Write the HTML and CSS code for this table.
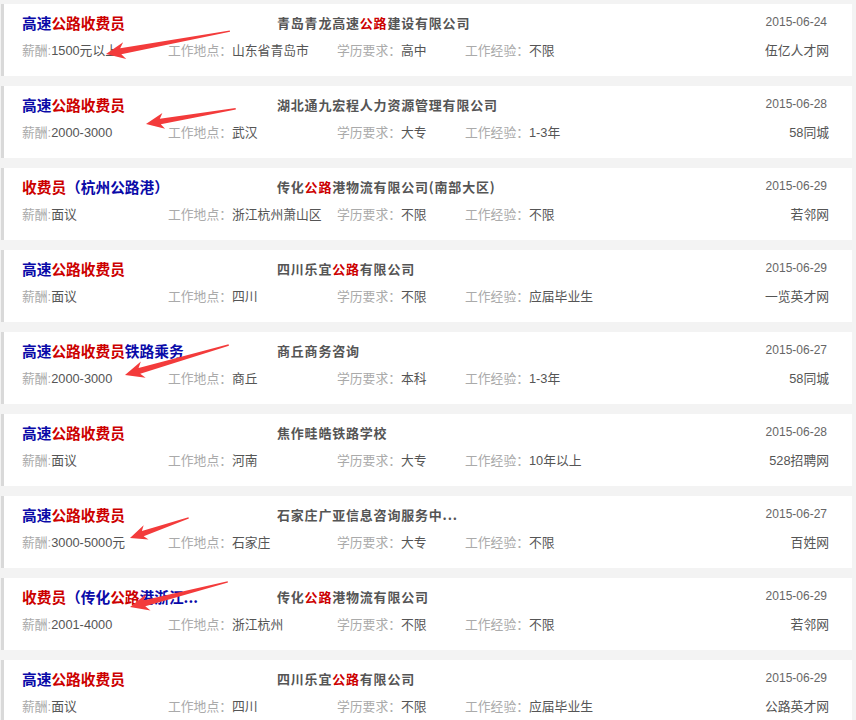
FILE: index.html
```html
<!DOCTYPE html>
<html lang="zh">
<head>
<meta charset="utf-8">
<title>高速公路收费员</title>
<link rel="stylesheet" href="styles.css">
</head>
<body>
<div class="list">
  <div class="card">
    <div class="row top">
      <div class="title"><span class="b">高速</span><span class="r">公路收费员</span></div>
      <div class="company">青岛青龙高速<span class="r">公路</span>建设有限公司</div>
      <div class="date">2015-06-24</div>
    </div>
    <div class="row info">
      <div class="c1"><span class="lab">薪酬:</span>1500元以上</div>
      <div class="c2"><span class="lab">工作地点：</span>山东省青岛市</div>
      <div class="c3"><span class="lab">学历要求：</span>高中</div>
      <div class="c4"><span class="lab">工作经验：</span>不限</div>
      <div class="src">伍亿人才网</div>
    </div>
  </div>
  <div class="card">
    <div class="row top">
      <div class="title"><span class="b">高速</span><span class="r">公路收费员</span></div>
      <div class="company">湖北通九宏程人力资源管理有限公司</div>
      <div class="date">2015-06-28</div>
    </div>
    <div class="row info">
      <div class="c1"><span class="lab">薪酬:</span>2000-3000</div>
      <div class="c2"><span class="lab">工作地点：</span>武汉</div>
      <div class="c3"><span class="lab">学历要求：</span>大专</div>
      <div class="c4"><span class="lab">工作经验：</span>1-3年</div>
      <div class="src">58同城</div>
    </div>
  </div>
  <div class="card">
    <div class="row top">
      <div class="title"><span class="r">收费员</span><span class="b">（杭州公路港）</span></div>
      <div class="company">传化<span class="r">公路</span>港物流有限公司(南部大区)</div>
      <div class="date">2015-06-29</div>
    </div>
    <div class="row info">
      <div class="c1"><span class="lab">薪酬:</span>面议</div>
      <div class="c2"><span class="lab">工作地点：</span>浙江杭州萧山区</div>
      <div class="c3"><span class="lab">学历要求：</span>不限</div>
      <div class="c4"><span class="lab">工作经验：</span>不限</div>
      <div class="src">若邻网</div>
    </div>
  </div>
  <div class="card">
    <div class="row top">
      <div class="title"><span class="b">高速</span><span class="r">公路收费员</span></div>
      <div class="company">四川乐宜<span class="r">公路</span>有限公司</div>
      <div class="date">2015-06-29</div>
    </div>
    <div class="row info">
      <div class="c1"><span class="lab">薪酬:</span>面议</div>
      <div class="c2"><span class="lab">工作地点：</span>四川</div>
      <div class="c3"><span class="lab">学历要求：</span>不限</div>
      <div class="c4"><span class="lab">工作经验：</span>应届毕业生</div>
      <div class="src">一览英才网</div>
    </div>
  </div>
  <div class="card">
    <div class="row top">
      <div class="title"><span class="b">高速</span><span class="r">公路收费员</span><span class="b">铁路乘务</span></div>
      <div class="company">商丘商务咨询</div>
      <div class="date">2015-06-27</div>
    </div>
    <div class="row info">
      <div class="c1"><span class="lab">薪酬:</span>2000-3000</div>
      <div class="c2"><span class="lab">工作地点：</span>商丘</div>
      <div class="c3"><span class="lab">学历要求：</span>本科</div>
      <div class="c4"><span class="lab">工作经验：</span>1-3年</div>
      <div class="src">58同城</div>
    </div>
  </div>
  <div class="card">
    <div class="row top">
      <div class="title"><span class="b">高速</span><span class="r">公路收费员</span></div>
      <div class="company">焦作畦皓铁路学校</div>
      <div class="date">2015-06-28</div>
    </div>
    <div class="row info">
      <div class="c1"><span class="lab">薪酬:</span>面议</div>
      <div class="c2"><span class="lab">工作地点：</span>河南</div>
      <div class="c3"><span class="lab">学历要求：</span>大专</div>
      <div class="c4"><span class="lab">工作经验：</span>10年以上</div>
      <div class="src">528招聘网</div>
    </div>
  </div>
  <div class="card">
    <div class="row top">
      <div class="title"><span class="b">高速</span><span class="r">公路收费员</span></div>
      <div class="company">石家庄广亚信息咨询服务中...</div>
      <div class="date">2015-06-27</div>
    </div>
    <div class="row info">
      <div class="c1"><span class="lab">薪酬:</span>3000-5000元</div>
      <div class="c2"><span class="lab">工作地点：</span>石家庄</div>
      <div class="c3"><span class="lab">学历要求：</span>大专</div>
      <div class="c4"><span class="lab">工作经验：</span>不限</div>
      <div class="src">百姓网</div>
    </div>
  </div>
  <div class="card">
    <div class="row top">
      <div class="title"><span class="r">收费员</span><span class="b">（传化</span><span class="r">公路</span><span class="b">港浙江...</span></div>
      <div class="company">传化<span class="r">公路</span>港物流有限公司</div>
      <div class="date">2015-06-29</div>
    </div>
    <div class="row info">
      <div class="c1"><span class="lab">薪酬:</span>2001-4000</div>
      <div class="c2"><span class="lab">工作地点：</span>浙江杭州</div>
      <div class="c3"><span class="lab">学历要求：</span>不限</div>
      <div class="c4"><span class="lab">工作经验：</span>不限</div>
      <div class="src">若邻网</div>
    </div>
  </div>
  <div class="card">
    <div class="row top">
      <div class="title"><span class="b">高速</span><span class="r">公路收费员</span></div>
      <div class="company">四川乐宜<span class="r">公路</span>有限公司</div>
      <div class="date">2015-06-29</div>
    </div>
    <div class="row info">
      <div class="c1"><span class="lab">薪酬:</span>面议</div>
      <div class="c2"><span class="lab">工作地点：</span>四川</div>
      <div class="c3"><span class="lab">学历要求：</span>不限</div>
      <div class="c4"><span class="lab">工作经验：</span>应届毕业生</div>
      <div class="src">公路英才网</div>
    </div>
  </div>
</div>
<svg class="arrows" width="856" height="720" viewBox="0 0 856 720">
  <g fill="#f33b3b">
    <g transform="translate(106 54) rotate(-10.5)"><polygon points="0,0 19,-8.5 15,-3 126,-0.6 126,0.8 15,3 19,8.5"/></g>
    <g transform="translate(146 124) rotate(-9.7)"><polygon points="0,0 18,-8 14.5,-2.8 91,-0.6 91,0.8 14.5,2.8 18,8"/></g>
    <g transform="translate(125 375) rotate(-16.2)"><polygon points="0,0 19,-8.5 15,-3 108,-0.6 108,0.8 15,3 19,8.5"/></g>
    <g transform="translate(130 538) rotate(-19)"><polygon points="0,0 17,-7.5 13.5,-2.7 62,-0.6 62,0.8 13.5,2.7 17,7.5"/></g>
    <g transform="translate(130 607) rotate(-14.5)"><polygon points="0,0 19,-8.5 15,-3 101,-0.6 101,0.8 15,3 19,8.5"/></g>
  </g>
</svg>
</body>
</html>
```

FILE: styles.css
```css
html, body {
  margin: 0;
  padding: 0;
  background: #f3f3f3;
}
body {
  position: relative;
  width: 856px;
  height: 720px;
  overflow: hidden;
  font-family: "Liberation Sans", "Noto Sans CJK SC", sans-serif;
  font-size: 12px;
  color: #555;
}
.list {
  display: flex;
  flex-direction: column;
  gap: 10px;
  padding: 4px 4px 0 1px;
}
.card {
  height: 72px;
  box-sizing: border-box;
  background: #fff;
  border-left: 3px solid #d9d9d9;
  padding: 7px 25px 0 18px;
}
.row {
  display: flex;
  align-items: center;
}
.top {
  height: 22px;
}
.info {
  height: 18px;
  margin-top: 7px;
  font-size: 12.8px;
}
.title {
  width: 255px;
  font-family: "Noto Sans CJK SC", sans-serif;
  font-weight: bold;
  font-size: 14.7px;
  white-space: nowrap;
}
.b { color: #0a0aa8; }
.r { color: #cc0000; }
.company {
  flex: 1;
  font-family: "Noto Sans CJK SC", sans-serif;
  font-weight: bold;
  font-size: 13px;
  letter-spacing: 0.8px;
  color: #555;
  white-space: nowrap;
}
.date {
  color: #666;
  font-size: 12px;
}
.info > div {
  white-space: nowrap;
  color: #555;
}
.lab { color: #aaa; }
.c1 { width: 146px; }
.c2 { width: 169px; }
.c3 { width: 128px; }
.c4 { flex: 1; }
.src {
  margin-right: -2px;
}
.arrows {
  position: absolute;
  top: 0;
  left: 0;
  pointer-events: none;
}
```
